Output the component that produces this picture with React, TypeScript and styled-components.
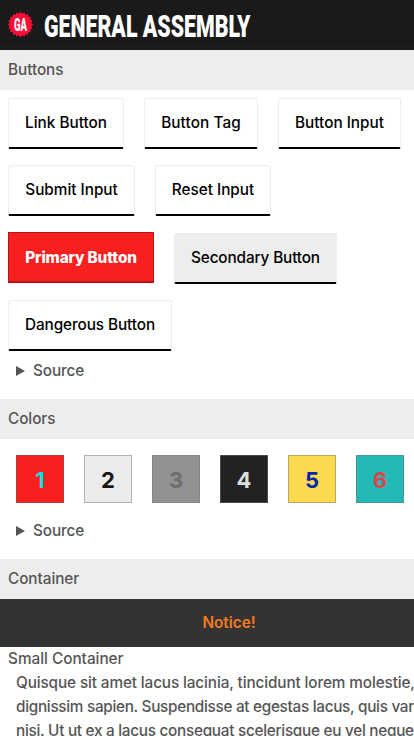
import React from "react";
import styled, { createGlobalStyle } from "styled-components";

const GlobalStyle = createGlobalStyle`
  * { box-sizing: border-box; }
  html, body { margin: 0; overflow: hidden; }
  body {
    background: #fff;
    color: #555;
    font: 500 15.3px/24px Inter, "Open Sans", sans-serif;
  }
`;

const Page = styled.div`
  width: 100%;
  height: 736px;
  overflow: hidden;
`;

const Header = styled.header`
  display: flex;
  align-items: center;
  height: 50px;
  padding: 0 8px;
  gap: 11px;
  background: #1a1a1a;
  border-bottom: 5px solid #1c1c1c;
`;

const Logo = styled.svg`
  flex: none;
  width: 25px;
  height: 25px;
  margin-top: 4px;
  overflow: visible;
`;

const LogoText = styled.text`
  font: 900 19px Roboto, sans-serif;
`;

const Brand = styled.h1`
  margin: 6px 0 0;
  color: #fff;
  font: 900 32px/38px Roboto, sans-serif;
  white-space: nowrap;
  transform: scaleX(0.667);
  transform-origin: left center;
`;

const SectionTitle = styled.h2`
  margin: 0;
  height: 40px;
  padding: 0 8px;
  background: #ededed;
  font-size: inherit;
  font-weight: 550;
  line-height: 40px;
  letter-spacing: -0.05px;
`;

const ButtonArea = styled.div`
  display: flex;
  flex-direction: column;
  gap: 16px;
  padding: 8px 8px 0;
`;

const ButtonRow = styled.div`
  display: flex;
  gap: 20px;
`;

type Variant = "plain" | "primary" | "secondary";

const Button = styled.button<{ $width: number; $spacing?: number; $variant?: Variant }>`
  flex: none;
  width: ${(p) => p.$width}px;
  height: 51px;
  padding: 0 0 1px;
  border: 1px solid #ededed;
  border-bottom: 2px solid #000;
  border-radius: 2px;
  background: ${(p) => (p.$variant === "secondary" ? "#ededed" : "#fff")};
  color: #000;
  font: inherit;
  letter-spacing: ${(p) => p.$spacing ?? 0}px;
  white-space: nowrap;
  ${(p) =>
    p.$variant === "primary" &&
    `
    padding: 1px 0 0;
    border: 1px solid #b91414;
    border-bottom-width: 2px;
    border-radius: 0;
    background: #f8201f;
    color: #fff;
    font-weight: 800;
  `}
`;

const PrimaryRow = styled(ButtonRow)`
  height: 52px;
  & > :last-child { align-self: flex-end; }
`;

const Source = styled.div`
  display: flex;
  align-items: center;
  gap: 8px;
  height: 24px;
  padding-left: 16px;
  letter-spacing: -0.1px;
`;

const Triangle = styled.svg`
  width: 9px;
  height: 10px;
  fill: #555;
`;

const ButtonSource = styled(Source)`
  margin: 8px 0 16px;
`;

const Swatches = styled.div`
  display: flex;
  gap: 20px;
  padding: 16px 0 16px 16px;
`;

const Swatch = styled.div<{ $bg: string; $fg: string; $border: string }>`
  flex: none;
  width: 48px;
  height: 48px;
  border: 1px solid ${(p) => p.$border};
  background: ${(p) => p.$bg};
  color: ${(p) => p.$fg};
  font-size: 22px;
  font-weight: 700;
  line-height: 49px;
  text-align: center;
`;

const ColorSource = styled(Source)`
  margin-bottom: 16px;
`;

const Notice = styled.div`
  height: 48px;
  padding-left: 44px;
  background: #333;
  color: #f47b20;
  font-weight: 600;
  line-height: 47px;
  text-align: center;
`;

const SmallTitle = styled.div`
  padding-left: 8px;
`;

const Copy = styled.div`
  padding-left: 16px;
`;

const Line = styled.div<{ $spacing: number }>`
  letter-spacing: ${(p) => p.$spacing}px;
  white-space: nowrap;
`;

const swatches = [
  { bg: "#f8201f", fg: "#07dfe0", border: "#b5403e" },
  { bg: "#ebebeb", fg: "#141414", border: "#b0b0b0" },
  { bg: "#919191", fg: "#6e6e6e", border: "#858585" },
  { bg: "#222", fg: "#ddd", border: "#4c4c4c" },
  { bg: "#fcda4f", fg: "#0325b0", border: "#b9a862" },
  { bg: "#23b9b7", fg: "#dc4648", border: "#4c9796" },
];

const badgePoints = Array.from({ length: 40 }, (_, i) => {
  const radius = i % 2 ? 11 : 12.6;
  const angle = (i * Math.PI) / 20;
  return `${12.5 + radius * Math.cos(angle)},${12.5 + radius * Math.sin(angle)}`;
}).join(" ");

const Disclosure = () => (
  <>
    <Triangle viewBox="0 0 9 10"><path d="M0 0L9 5L0 10Z" /></Triangle>
    Source
  </>
);

export default function App() {
  return (
    <Page>
      <GlobalStyle />
      <Header>
        <Logo viewBox="0 0 25 25">
          <polygon points={badgePoints} fill="#fc0d38" />
          <LogoText x="12.5" y="19.3" textAnchor="middle" textLength="13" lengthAdjust="spacingAndGlyphs" fill="#fff">GA</LogoText>
        </Logo>
        <Brand>GENERAL ASSEMBLY</Brand>
      </Header>
      <SectionTitle>Buttons</SectionTitle>
      <ButtonArea>
        <ButtonRow>
          <Button $width={116}>Link Button</Button>
          <Button $width={114} $spacing={0.1}>Button Tag</Button>
          <Button $width={123}>Button Input</Button>
        </ButtonRow>
        <ButtonRow>
          <Button $width={127}>Submit Input</Button>
          <Button $width={116}>Reset Input</Button>
        </ButtonRow>
        <PrimaryRow>
          <Button $width={146} $spacing={-0.13} $variant="primary">Primary Button</Button>
          <Button $width={163} $spacing={-0.12} $variant="secondary">Secondary Button</Button>
        </PrimaryRow>
        <ButtonRow>
          <Button $width={164} $spacing={-0.08}>Dangerous Button</Button>
        </ButtonRow>
      </ButtonArea>
      <ButtonSource><Disclosure /></ButtonSource>
      <SectionTitle>Colors</SectionTitle>
      <Swatches>
        {swatches.map((s, i) => (
          <Swatch key={s.bg} $bg={s.bg} $fg={s.fg} $border={s.border}>{i + 1}</Swatch>
        ))}
      </Swatches>
      <ColorSource><Disclosure /></ColorSource>
      <SectionTitle>Container</SectionTitle>
      <Notice>Notice!</Notice>
      <SmallTitle>Small Container</SmallTitle>
      <Copy>
        <Line $spacing={-0.11}>Quisque sit amet lacus lacinia, tincidunt lorem molestie,</Line>
        <Line $spacing={-0.29}>dignissim sapien. Suspendisse at egestas lacus, quis var</Line>
        <Line $spacing={-0.27}>nisi. Ut ut ex a lacus consequat scelerisque eu vel neque</Line>
      </Copy>
    </Page>
  );
}
